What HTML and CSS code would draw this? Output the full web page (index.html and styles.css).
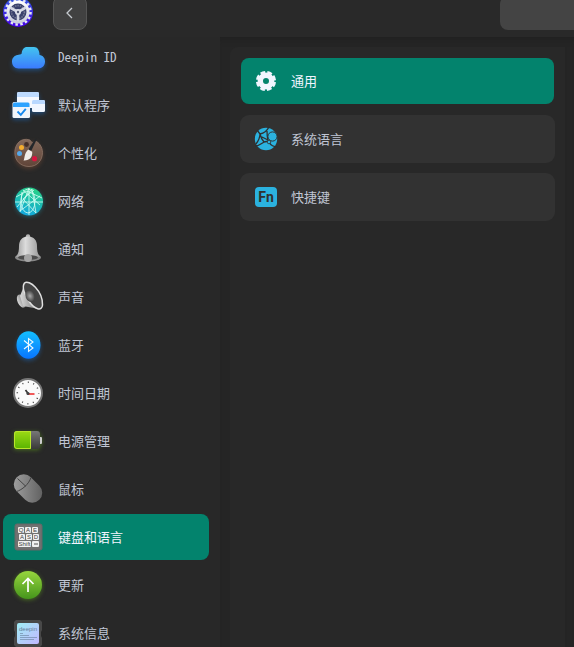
FILE: index.html
```html
<!DOCTYPE html>
<html lang="zh-CN">
<head>
<meta charset="utf-8">
<title>控制中心</title>
<link rel="stylesheet" href="styles.css">
</head>
<body>
<header class="titlebar">
  <svg class="logo" viewBox="0 0 32 32" aria-hidden="true">
    <defs><linearGradient id="lg" x2="0" y2="1"><stop stop-color="#3159dc"/><stop offset="1" stop-color="#4600e8"/></linearGradient>
    <linearGradient id="lm" x2="0" y2="1"><stop stop-color="#fff"/><stop offset="1" stop-color="#c9ccdc"/></linearGradient></defs>
    <circle cx="16" cy="16" r="15" fill="url(#lg)"/>
    <circle cx="16" cy="16" r="12.500" fill="none" stroke="#e4e6f2" stroke-width="2.600" stroke-dasharray="2.500 2.409"/>
    <circle cx="16" cy="16" r="10" fill="#39406b" stroke="url(#lm)" stroke-width="3"/>
    <circle cx="16" cy="16" r="6.400" fill="none" stroke="#747995" stroke-width="1.600" stroke-dasharray="1.400 1"/>
    <path d="M16 16v9M16 16L8 11.500M16 16l8-4.500" stroke="#d5d8e4" stroke-width="2.600"/>
    <circle cx="16" cy="16" r="3" fill="#dfe1ea"/><circle cx="16" cy="16" r="1.200" fill="#555c79"/>
  </svg>
  <button class="back" type="button" aria-label="返回"><svg viewBox="0 0 12 12" aria-hidden="true"><path d="M8 1L3 6l5 5" fill="none" stroke="#c6cad0" stroke-width="1.300"/></svg></button>
  <input class="search" type="search" aria-label="搜索">
</header>
<div class="body">
<nav class="sidebar">
  <a class="item" href="#"><svg viewBox="0 0 36 36" class="glow-blue" aria-hidden="true"><defs><linearGradient id="cl" x2="0" y2="1"><stop stop-color="#43c4ef"/><stop offset="1" stop-color="#3b7bff"/></linearGradient></defs><path d="M8.500 29.500C4.500 29.500 2 26.500 2 22.500c0-3.500 2.500-6 5.500-6.500 1.500-.3 3.600-.3 4.200-1.500C12 10.500 14 8 17 8h7c3.500 0 5.500 3.500 5.500 8 3.500.5 5.500 3 5.500 6.500 0 4-2.700 7-7 7z" fill="url(#cl)"/></svg><span>Deepin ID</span></a>
  <a class="item" href="#"><svg viewBox="0 0 36 36" class="glow-blue" aria-hidden="true"><rect x="7" y="5" width="22" height="16" rx="1.500" fill="#f4f8ff"/><path d="M7 10V6.500Q7 5 8.500 5h19Q29 5 29 6.500V10z" fill="#bcdaff"/><rect x="22" y="13" width="13" height="12" rx="1.500" fill="#f1f6ff"/><path d="M22 17v-2.500q0-1.500 1.500-1.500h10q1.500 0 1.500 1.500V17z" fill="#b9d8ff"/><rect x="2.500" y="15" width="17.500" height="16" rx="1.500" fill="#f0f5fb"/><path d="M3 20v-3q0-1.500 1.500-1.500H18q1.500 0 1.500 1.500v3z" fill="#2da3ff"/><path d="M7.500 24.500l3.300 3.300 5-6" fill="none" stroke="#1689ef" stroke-width="1.900"/></svg><span>默认程序</span></a>
  <a class="item" href="#"><svg viewBox="0 0 36 36" class="glow-brown" aria-hidden="true"><defs><linearGradient id="pa" x2="0" y2="1"><stop stop-color="#83695b"/><stop offset="1" stop-color="#604438"/></linearGradient></defs><path d="M20 5C11 2 4.800 9 4.800 17.500 4.800 26 11 31.500 19 31.500s13.500-6 13.500-14C32.500 12 29 7 25 6c-1.500 2-3.500 2-5-1z" fill="url(#pa)" stroke="#957b6d" stroke-width=".7"/><circle cx="16.500" cy="9.500" r="2.400" fill="#432e28"/><circle cx="11.500" cy="12.500" r="2.500" fill="#f5ae2f"/><circle cx="9.500" cy="18.500" r="2.500" fill="#55a8e9"/><circle cx="24.500" cy="23.700" r="2.600" fill="#d6163f"/><path d="M25.500 3.500l1.300.7-5.500 11.500-3-1.200z" fill="#24272b"/><path d="M18.200 14.500l4 2.300c.4 5-2.200 9-8.700 8.700 1.500-2 .2-6.500 4.700-11z" fill="#f0ece8"/></svg><span>个性化</span></a>
  <a class="item" href="#"><svg viewBox="0 0 36 36" class="glow-cyan" aria-hidden="true"><defs><linearGradient id="ne" x1=".7" x2=".4" y2="1"><stop stop-color="#28d283"/><stop offset="1" stop-color="#12a8df"/></linearGradient></defs><circle cx="19" cy="18.500" r="14" fill="url(#ne)"/><g fill="none" stroke="#d5fff5" stroke-width=".8"><path d="M5 19h28M19 5v27M13 7l17 15M7 24L22 6l4 24M12 9l-2 19 20-15M19 5l-9 24M24 7L13 16l13 14M6 14l11-6 15 7"/><ellipse cx="18" cy="18" rx="7" ry="12"/></g></svg><span>网络</span></a>
  <a class="item" href="#"><svg viewBox="0 0 36 36" aria-hidden="true"><defs><linearGradient id="be"><stop stop-color="#999"/><stop offset=".4" stop-color="#dcdcdc"/><stop offset="1" stop-color="#969696"/></linearGradient></defs><circle cx="18" cy="5.500" r="2.200" fill="#b5b5b5"/><ellipse cx="18" cy="26.500" rx="13" ry="4" fill="#888"/><path d="M18 5.500c-6 0-9 4-9 9.500 0 5-.5 8-3.500 11h25c-3-3-3.500-6-3.500-11 0-5.500-3-9.500-9-9.500z" fill="url(#be)"/><ellipse cx="18" cy="26.500" rx="10" ry="2.600" fill="#4c4c4c"/><circle cx="18" cy="27" r="4" fill="#a5a5a5"/></svg><span>通知</span></a>
  <a class="item" href="#"><svg viewBox="0 0 36 36" aria-hidden="true"><defs><radialGradient id="sp"><stop stop-color="#aaa"/><stop offset="1" stop-color="#444"/></radialGradient><linearGradient id="sb"><stop stop-color="#d8d8d8"/><stop offset="1" stop-color="#777"/></linearGradient></defs><ellipse cx="11.500" cy="22" rx="4" ry="7" fill="url(#sb)" transform="rotate(-25 11.500 22)"/><path d="M10 17l4-10 15 23-16-3z" fill="url(#sb)"/><path d="M14.500 4C19 0 33 12 32.500 26c-.5 7-8 4-13-3C14.500 16 11.500 8 14.500 4z" fill="#434343" stroke="#e0e0e0" stroke-width="1.500"/><ellipse cx="20" cy="17" rx="4.500" ry="6" fill="url(#sp)" transform="rotate(-22 20 17)"/></svg><span>声音</span></a>
  <a class="item" href="#"><svg viewBox="0 0 36 36" class="glow-blue" aria-hidden="true"><defs><linearGradient id="bt" x2="0" y2="1"><stop stop-color="#13bfff"/><stop offset="1" stop-color="#0874ff"/></linearGradient></defs><ellipse cx="18.500" cy="18" rx="12" ry="13.800" fill="url(#bt)"/><path d="M14 13.500l9 7.500-4.500 3.500v-13L23 15l-9 7" fill="none" stroke="#effaff" stroke-width="1.100"/></svg><span>蓝牙</span></a>
  <a class="item" href="#"><svg viewBox="0 0 36 36" aria-hidden="true"><circle cx="18" cy="18" r="14" fill="#fafafa" stroke="#777" stroke-width="2"/><circle cx="18" cy="18" r="10.700" fill="none" stroke="#444" stroke-width="1.500" stroke-dasharray="1 4.602" stroke-dashoffset=".5"/><path d="M18.500 19l-3-4" stroke="#333" stroke-width="1.700"/><path d="M18 19h6.500" stroke="#f04747" stroke-width="1.800"/><circle cx="18" cy="18.500" r="1.600" fill="#444"/></svg><span>时间日期</span></a>
  <a class="item" href="#"><svg viewBox="0 0 36 36" class="glow-green" aria-hidden="true"><defs><linearGradient id="ba" x2="0" y2="1"><stop stop-color="#9cdb15"/><stop offset="1" stop-color="#59b300"/></linearGradient><linearGradient id="bg" x2="0" y2="1"><stop stop-color="#777"/><stop offset="1" stop-color="#393939"/></linearGradient></defs><rect x="29" y="14" width="3" height="7" rx="1" fill="#ccc"/><rect x="4" y="8" width="26" height="18" rx="3" fill="url(#bg)"/><path d="M21 8H7Q4 8 4 11v12q0 3 3 3h14z" fill="url(#ba)"/><path d="M20.500 8.500H7Q4.500 8.500 4.500 11v12q0 2.500 2.500 2.500h13.500z" fill="none" stroke="#b9e52c"/></svg><span>电源管理</span></a>
  <a class="item" href="#"><svg viewBox="0 0 36 36" aria-hidden="true"><defs><linearGradient id="mo" x2=".6" y2="1"><stop stop-color="#a6a6a6"/><stop offset="1" stop-color="#656565"/></linearGradient></defs><rect x="8" y="1.500" width="20" height="32" rx="10" fill="url(#mo)" transform="rotate(-45 18 17.500)"/><path d="M6.500 20.500C12 19 19 13 21 6.500M7.500 7.500l8.500 8" fill="none" stroke="#444" stroke-width="1"/></svg><span>鼠标</span></a>
  <a class="item selected" href="#" aria-current="page"><svg viewBox="0 0 36 36" aria-hidden="true"><rect x="5" y="5" width="27" height="26" rx="2" fill="#707170" stroke="#666"/><g fill="#f0f1f0"><rect x="8" y="8" width="6" height="6" rx="1"/><rect x="15" y="8" width="6" height="6" rx="1"/><rect x="22" y="8" width="6" height="6" rx="1"/><rect x="9" y="15" width="6" height="6" rx="1"/><rect x="16" y="15" width="6" height="6" rx="1"/><rect x="23" y="15" width="6" height="6" rx="1"/><rect x="8" y="22" width="13" height="6" rx="1"/><rect x="22" y="22" width="7" height="6" rx="1"/></g><g class="keys"><text x="11" y="13">Q</text><text x="18" y="13">A</text><text x="25" y="13">E</text><text x="12" y="20">A</text><text x="19" y="20">S</text><text x="26" y="20">D</text><text x="14.500" y="27">Shift</text></g><path d="M24 25h4" stroke="#555"/></svg><span>键盘和语言</span></a>
  <a class="item" href="#"><svg viewBox="0 0 36 36" class="glow-green" aria-hidden="true"><defs><linearGradient id="up" x2="0" y2="1"><stop stop-color="#97d53e"/><stop offset="1" stop-color="#45951b"/></linearGradient></defs><circle cx="18" cy="18" r="14" fill="url(#up)"/><path d="M18 25V12M12.500 17l5.500-5.500 5.500 5.500" fill="none" stroke="#fff" stroke-width="1.700"/></svg><span>更新</span></a>
  <a class="item" href="#"><svg viewBox="0 0 36 36" aria-hidden="true"><defs><linearGradient id="ch" x2="1" y2="1"><stop stop-color="#a0edf5"/><stop offset="1" stop-color="#c2b7ff"/></linearGradient></defs><path d="M6 5h24l2 2v8l-1 2v4l1 2v7l-2 2H6l-2-2v-7l1-2v-4l-1-2V7z" fill="#484848"/><rect x="7" y="8" width="22" height="21" rx="2" fill="url(#ch)"/><text class="brand" x="18" y="16">deepin</text><path d="M10 18.500h3M10 20.500h9M10 22.500h17M10 24.500h14" stroke="#718ba8" stroke-width=".7"/></svg><span>系统信息</span></a>
</nav>
<main class="content">
  <div class="panel">
    <a class="card selected" href="#" aria-current="page"><svg viewBox="0 0 24 24" aria-hidden="true"><circle cx="12" cy="12" r="5.700" fill="none" stroke="#f1f5ff" stroke-width="5.400"/><circle cx="12" cy="12" r="8.700" fill="none" stroke="#f1f5ff" stroke-width="2.800" stroke-dasharray="4.700 2.133" stroke-dashoffset="-1.066"/></svg><span>通用</span></a>
    <a class="card" href="#"><svg viewBox="0 0 24 24" aria-hidden="true"><circle cx="12" cy="12" r="11.200" fill="#2bb2df"/><g fill="none" stroke="#303030" stroke-width="1.300"><path d="M3 3l3 4c5-1 7-3 9-7M6 7c0 3-1 6-4 10M6 7c1 4 3 7 4 8M13 4c0 4 0 6 1 9M1 19c4 0 6-2 9-4M10 15l5-1M15 15c2 4 5 5 9 5M14 13L6 9"/></g><circle cx="18.500" cy="9.500" r="4.600" fill="#2bb2df" stroke="#303030"/><circle cx="15" cy="15" r="1.800" fill="#2bb2df" stroke="#303030" stroke-width=".8"/></svg><span>系统语言</span></a>
    <a class="card" href="#"><svg viewBox="0 0 24 24" aria-hidden="true"><rect x="1" y="2" width="22" height="20" rx="4" fill="#2bb2df"/><text class="fn" x="12" y="17">Fn</text></svg><span>快捷键</span></a>
  </div>
</main>
</div>
</body>
</html>
```

FILE: styles.css
```css
* { box-sizing: border-box; }
body {
  margin: 0;
  height: 100vh;
  overflow: hidden;
  display: flex;
  flex-direction: column;
  background: #282828;
  color: #c0c6d4;
  font: 13px/20px "Noto Sans Mono CJK SC", "Noto Sans CJK SC", sans-serif;
}
.titlebar {
  flex: none;
  height: 37px;
  display: flex;
  align-items: flex-start;
  background: #292929;
}
.logo { width: 32px; height: 32px; margin: -4px 0 0 2px; }
.back {
  width: 34px;
  height: 34px;
  margin: -4px 0 0 19px;
  padding: 0;
  display: grid;
  place-items: center;
  border: 1px solid #555;
  border-radius: 8px;
  background: #414141;
}
.back svg { width: 12px; height: 12px; }
.search {
  flex: 1;
  min-width: 0;
  height: 34px;
  margin: -4px 0 0 413px;
  border: 0;
  border-radius: 8px 0 0 8px;
  background: #444;
  color: inherit;
}
.body { flex: 1; min-height: 0; display: flex; overflow: hidden; }
.sidebar {
  flex: none;
  width: 220px;
  margin-top: -3px;
  padding: 0 11px 0 3px;
  display: flex;
  flex-direction: column;
  gap: 2px;
  background: #282828;
}
.item {
  flex: none;
  height: 46px;
  padding-left: 7px;
  display: flex;
  align-items: center;
  gap: 12px;
  border-radius: 8px;
  color: inherit;
  text-decoration: none;
}
.item svg { width: 36px; height: 36px; overflow: visible; }
.item.selected { background: #03836d; color: #f1f5ff; }
.content {
  flex: 1;
  padding: 10px 7px 0 10px;
  background: #252525;
  box-shadow: inset 0 8px 6px -6px #202020;
}
.panel {
  height: 100%;
  padding: 10px;
  display: flex;
  flex-direction: column;
  gap: 10px;
  border-right: 2px solid #242424;
  border-radius: 8px 0 0;
  background: #282828;
}
.card {
  height: 48px;
  padding-left: 13px;
  display: flex;
  align-items: center;
  gap: 13px;
  border: 1px solid transparent;
  border-radius: 9px;
  background: #323232;
  color: inherit;
  text-decoration: none;
}
.card svg { width: 24px; height: 24px; }
.card.selected { background: #03836d; background-clip: padding-box; color: #f1f5ff; }
.keys text, .brand { font-family: "Liberation Sans", sans-serif; text-anchor: middle; }
.keys { font-size: 6px; fill: #444; }
.brand { font-size: 6px; fill: #66809a; }
.fn { font: 700 14px Roboto, "Liberation Sans", sans-serif; text-anchor: middle; fill: #303030; }
.glow-blue { filter: drop-shadow(0 2px 2px #167ee866); }
.glow-brown { filter: drop-shadow(0 2px 2px #93573a66); }
.glow-cyan { filter: drop-shadow(0 1px 2px #1db4cc66); }
.glow-green { filter: drop-shadow(0 1px 2px #64a91888); }
```
